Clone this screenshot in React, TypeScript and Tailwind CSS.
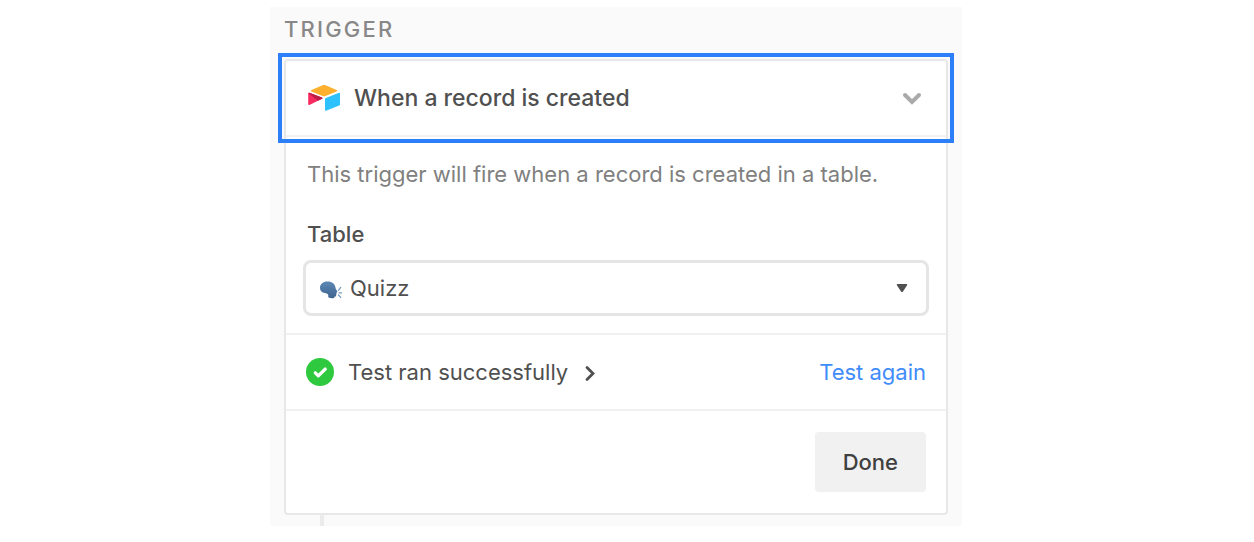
function AirtableLogo() {
  return (
    <svg aria-hidden="true" className="h-7 w-8 shrink-0" viewBox="0 0 32 28">
      <path d="M14.6 1.2 3.4 6.1c-.8.3-.8 1.100 0 1.400l11.200 4.600c1 .4 2 .4 3 0L28.600 7.500c.8-.3.8-1.100 0-1.400L17.600 1.200c-1-.4-2-.4-3 0Z" fill="#fcb02d" />
      <path d="M17 15v11c0 .6.500.9 1 .7l13.200-5.200c.5-.2.800-.5.800-1V9.400c0-.6-.5-.9-1-.7l-13.200 5.300c-.5.200-.8.500-.8 1Z" fill="#2dc1fd" />
      <path d="m14 14.800-12.600 6.100c-.7.300-1.200 0-1.200-.700V9.700c0-.7.500-1.200 1.200-.9L14 13.600c.6.300.6.900 0 1.200Z" fill="#f82b60" />
      <path d="m14 14.800-4 1.900L.5 9.200c.2-.4.500-.5.900-.4L14 13.600c.6.300.6.900 0 1.200Z" fill="#ba1e45" />
    </svg>
  );
}

function SpeakingHead() {
  return (
    <svg aria-hidden="true" className="mt-1 h-5 w-6 shrink-0" viewBox="0 0 24 20">
      <defs>
        <linearGradient id="head" x1="0" y1="0" x2="0" y2="1">
          <stop offset="0" stopColor="#5d88b5" />
          <stop offset="1" stopColor="#3e638f" />
        </linearGradient>
      </defs>
      <path d="M9.500 1.500C5 1.500 2 4.200 2 7.800c0 2.500 1.300 4.200 3.600 4.900 1.700.5 3.600.600 4.400 1.700.4.700.4 1.800.2 2.900 1.700.9 4.300 1.200 6 .7l.3-1.500c.9.200 1.500 0 1.600-.6.100-.6 0-1 .2-1.400.2-.3.300-.6.100-1 .3-.3.300-.7.100-1.100.6-.1 1.100-.4.900-.9-.4-1-1.500-1.800-1.700-3C17.200 4.100 14.300 1.500 9.500 1.500Z" fill="url(#head)" />
      <path d="m20.500 10.300 2.200-2.900M21 12.800h2.500M20.500 15l2.200 2.400" fill="none" stroke="#6f98c0" strokeWidth="1.200" strokeLinecap="round" />
    </svg>
  );
}

export default function App() {
  return (
    <main className="flex min-h-screen justify-center bg-white py-[7px] pr-[22px] font-['Inter','Liberation_Sans',sans-serif] text-[22px] leading-7 text-[#505050]">
      <section className="w-full max-w-[692px] self-start bg-[#fafafa] px-[14px]">
        <h2 className="pt-2 pb-4 font-medium tracking-widest text-[#888888]">TRIGGER</h2>

        <div className="rounded border-2 border-[#e8e8e8] bg-white">
          <button
            type="button"
            aria-expanded="true"
            className="flex w-full items-center px-[22px] py-[23px] text-left text-[23px] font-medium outline-4 outline-offset-4 outline-[#2d7ff9]"
          >
            <AirtableLogo />
            <span className="ml-[14px] flex-1">When a record is created</span>
            <svg aria-hidden="true" className="mr-0.5 h-5 w-5" viewBox="0 0 20 20">
              <path d="m3 7 7 7 7-7" fill="none" stroke="#aaaaaa" strokeWidth="4" strokeLinecap="round" />
            </svg>
          </button>

          <div className="border-t-2 border-[#f2f2f2] px-[17px] pt-[23px] pb-[17px]">
            <p className="px-1 text-[#808080]">This trigger will fire when a record is created in a table.</p>
            <label htmlFor="table" className="mt-8 mb-3 block px-1 font-medium">
              Table
            </label>
            <div className="relative flex items-center rounded-lg border-3 border-[#e5e5e5] px-3">
              <SpeakingHead />
              <select id="table" className="h-[50px] flex-1 appearance-none bg-transparent pl-2 outline-none">
                <option>Quizz</option>
              </select>
              <svg aria-hidden="true" className="pointer-events-none absolute right-[18px] h-3 w-3" viewBox="0 0 12 12">
                <path d="M1.500 2h9c.7 0 1 .7.600 1.200L7 9.400c-.5.700-1.500.700-2 0L.900 3.200C.5 2.700.8 2 1.500 2Z" fill="#505050" />
              </svg>
            </div>
          </div>

          <div className="flex items-center justify-between border-t-2 border-[#f0f0f0] px-5 py-[23px]">
            <button type="button" className="flex items-center">
              <svg aria-hidden="true" className="mr-[14px] h-7 w-7" viewBox="0 0 28 28">
                <circle cx="14" cy="14" r="14" fill="#2fc940" />
                <path d="m9.300 14.800 3 3 7-6.800" fill="none" stroke="#fff" strokeWidth="3.200" strokeLinecap="round" strokeLinejoin="round" />
              </svg>
              Test ran successfully
              <svg aria-hidden="true" className="ml-4 h-5 w-3" viewBox="0 0 12 20">
                <path d="m3 5.500 6 6-6 6" fill="none" stroke="#505050" strokeWidth="2.800" strokeLinecap="round" />
              </svg>
            </button>
            <button type="button" className="text-[#408cfa]">
              Test again
            </button>
          </div>

          <div className="flex justify-end border-t-2 border-[#f0f0f0] px-5 py-[21px]">
            <button type="button" className="rounded bg-[#f1f1f1] px-7 py-4 font-medium text-[#404040]">
              Done
            </button>
          </div>
        </div>

        <div className="ml-9 h-[11px] w-1 bg-[#ebebeb]" />
      </section>
    </main>
  );
}
